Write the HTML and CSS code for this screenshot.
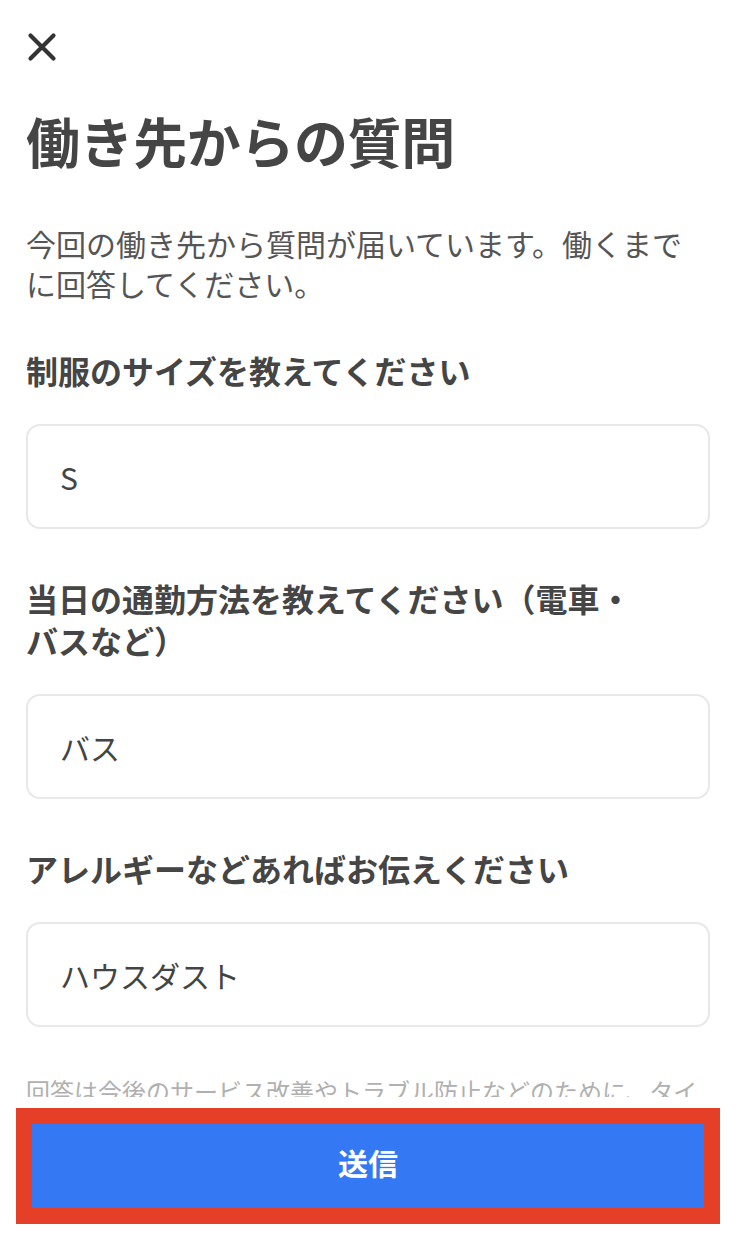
FILE: index.html
```html
<!DOCTYPE html>
<html lang="ja">
<head>
<meta charset="utf-8">
<title>働き先からの質問</title>
<link rel="stylesheet" href="styles.css">
</head>
<body>
<main class="page">
  <button class="close" aria-label="閉じる">
    <svg width="30" height="30" viewBox="0 0 30 30"><path d="M3.5 3.5 L26.5 26.5 M26.5 3.5 L3.5 26.5" stroke="#333" stroke-width="4.2" stroke-linecap="round" fill="none"/></svg>
  </button>
  <h1 class="title">働き先からの質問</h1>
  <p class="lead">今回の働き先から質問が届いています。働くまでに回答してください。</p>

  <section class="field">
    <h2 class="label">制服のサイズを教えてください</h2>
    <div class="input">S</div>
  </section>
  <section class="field">
    <h2 class="label">当日の通勤方法を教えてください（電車・<br>バスなど）</h2>
    <div class="input">バス</div>
  </section>
  <section class="field">
    <h2 class="label">アレルギーなどあればお伝えください</h2>
    <div class="input">ハウスダスト</div>
  </section>
  <p class="note">回答は今後のサービス改善やトラブル防止などのために、タイミーで利用させていただきます。</p>
</main>
<footer class="footer">
  <div class="highlight">
    <button class="submit">送信</button>
  </div>
</footer>
</body>
</html>
```

FILE: styles.css
```css
* { box-sizing: border-box; }
html, body { margin: 0; padding: 0; background: #fff; }
body {
  font-family: "Noto Sans CJK JP", "Noto Sans", sans-serif;
  color: #4a4a4a;
  width: 738px;
  height: 1238px;
  overflow: hidden;
  position: relative;
}
.page {
  padding: 32px 28px 0 26px;
  display: flex;
  flex-direction: column;
}
.close {
  border: 0;
  background: none;
  padding: 0;
  width: 30px;
  height: 30px;
  display: block;
  margin: 0 0 0 1px;
}
.title {
  margin: 47px 0 0;
  font-size: 54px;
  line-height: 64px;
  font-weight: 700;
  color: #454545;
  letter-spacing: -0.4px;
}
.lead {
  margin: 50px 0 0;
  font-size: 30px;
  line-height: 40px;
  color: #555;
}
.field { display: flex; flex-direction: column; }
.label {
  margin: 46px 0 0;
  font-size: 32px;
  line-height: 42px;
  font-weight: 700;
  color: #454545;
}
.field + .field .label { margin-top: 48px; }
.input {
  margin-top: 33px;
  height: 105px;
  border: 2px solid #e8e8e8;
  border-radius: 14px;
  padding: 0 32px;
  display: flex;
  align-items: center;
  font-size: 30px;
  color: #444;
}
.note {
  margin: 48px 0 0;
  font-size: 24px;
  line-height: 32px;
  color: #b0b0b0;
}
.footer {
  position: absolute;
  left: 0;
  right: 0;
  top: 1097px;
  bottom: 0;
  background: #fff;
  padding: 11px 18px 0 16px;
}
.highlight {
  border: 16px solid #e63f27;
  height: 116px;
}
.submit {
  display: block;
  width: 100%;
  height: 100%;
  border: 0;
  background: #3479f3;
  color: #fff;
  font-family: "Noto Sans CJK JP", sans-serif;
  font-size: 30px;
  font-weight: 700;
  padding: 0 0 8px;
}
```
